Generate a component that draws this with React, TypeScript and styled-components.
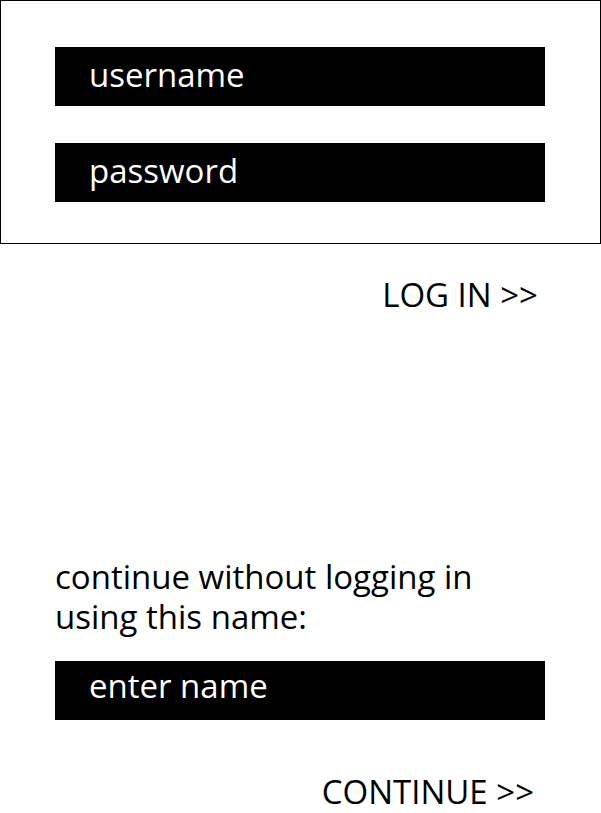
import styled, { createGlobalStyle } from "styled-components";

const GlobalStyle = createGlobalStyle`
  * {
    box-sizing: border-box;
  }
  body {
    margin: 0;
    background: #ffffff;
    font-family: "Open Sans", "Noto Sans", sans-serif;
    color: #000000;
  }
`;

const Page = styled.div`
  width: 601px;
  height: 813px;
  display: flex;
  flex-direction: column;
`;

const LoginBox = styled.form`
  width: 601px;
  height: 244px;
  border: 1px solid #000000;
  padding: 46px 0 0 54px;
  display: flex;
  flex-direction: column;
  gap: 37px;
`;

const Field = styled.input<{ $lift?: number }>`
  width: 490px;
  height: 59px;
  margin: 0;
  border: none;
  outline: none;
  background: #000000;
  color: #ffffff;
  font-family: "Open Sans", "Noto Sans", sans-serif;
  font-size: 33px;
  padding: 0 0 ${(p) => p.$lift ?? 4}px 34px;
  &::placeholder {
    color: #ffffff;
    opacity: 1;
  }
`;

const ActionRow = styled.div<{ $top: number; $right: number }>`
  display: flex;
  justify-content: flex-end;
  margin-top: ${(p) => p.$top}px;
  padding-right: ${(p) => p.$right}px;
`;

const ActionButton = styled.button`
  border: none;
  background: none;
  padding: 0;
  margin: 0;
  font-family: "Open Sans", "Noto Sans", sans-serif;
  font-size: 33px;
  line-height: 33px;
  color: #000000;
  cursor: pointer;
`;

const GuestSection = styled.div`
  margin-top: 246px;
  padding-left: 55px;
  display: flex;
  flex-direction: column;
  gap: 24px;
`;

const Prompt = styled.p`
  margin: 0;
  font-size: 33px;
  line-height: 40px;
`;

export default function App() {
  return (
    <>
      <GlobalStyle />
      <Page>
        <LoginBox>
          <Field type="text" placeholder="username" />
          <Field type="password" placeholder="password" />
        </LoginBox>
        <ActionRow $top={34} $right={63}>
          <ActionButton type="button">LOG IN &gt;&gt;</ActionButton>
        </ActionRow>
        <GuestSection>
          <Prompt>
            continue without logging in
            <br />
            using this name:
          </Prompt>
          <Field type="text" placeholder="enter name" $lift={11} />
        </GuestSection>
        <ActionRow $top={55} $right={67}>
          <ActionButton type="button">CONTINUE &gt;&gt;</ActionButton>
        </ActionRow>
      </Page>
    </>
  );
}
